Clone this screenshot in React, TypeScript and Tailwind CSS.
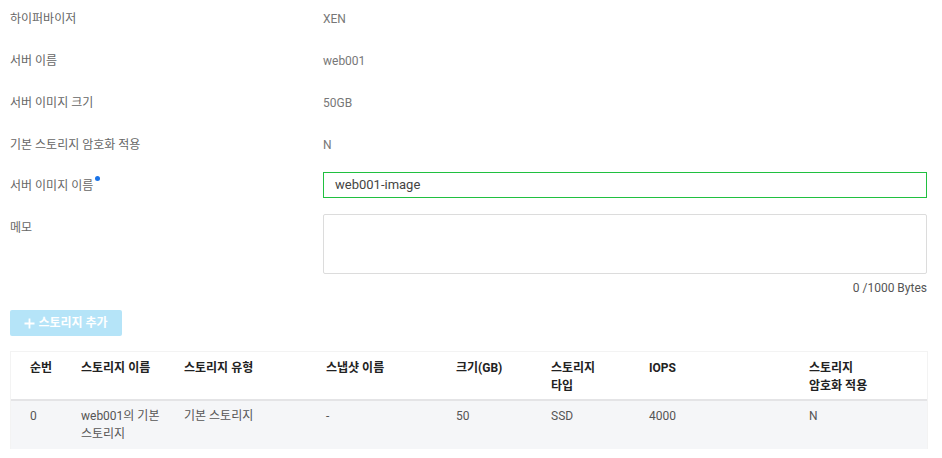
const FONT = "font-['Roboto','Noto_Sans_CJK_KR',sans-serif]";

const info = [
  { label: "하이퍼바이저", value: "XEN" },
  { label: "서버 이름", value: "web001" },
  { label: "서버 이미지 크기", value: "50GB" },
  { label: "기본 스토리지 암호화 적용", value: "N" },
];

export default function App() {
  return (
    <div className={`${FONT} h-[458px] w-[942px] overflow-hidden bg-white pl-[10px] pr-[15px] text-[12px]`}>
      {/* info rows */}
      <div className="mt-[-2px]">
        {info.map((row) => (
          <div key={row.label} className="flex h-[42px] items-center">
            <div className="w-[313px] text-[#666]">{row.label}</div>
            <div className="text-[#777]">{row.value}</div>
          </div>
        ))}
      </div>

      {/* image name */}
      <div className="mt-[6px] flex h-[26px] items-center">
        <div className="flex w-[313px] items-start pt-[2px] text-[#666]">
          서버 이미지 이름
          <span className="ml-[2px] mt-[-1px] h-[5px] w-[5px] rounded-full bg-[#1a73e8]" />
        </div>
        <div className="flex h-[26px] flex-1 items-center border border-[#20c040] px-[11px] text-[13px] text-[#444]">
          web001-image
        </div>
      </div>

      {/* memo */}
      <div className="mt-[16px] flex">
        <div className="w-[313px] pt-[5px] text-[#666]">메모</div>
        <div className="h-[60px] flex-1 rounded-[2px] border border-[#dcdcdc]" />
      </div>
      <div className="mt-[5px] text-right text-[#555]">0 /1000 Bytes</div>

      {/* add button */}
      <button className="mt-[13px] flex h-[26px] w-[112px] items-center justify-center gap-[3px] rounded-[2px] bg-[#b5e4f8] font-bold text-white">
        <svg width="11" height="11" viewBox="0 0 11 11">
          <path d="M5.5 0.5v10M0.5 5.5h10" stroke="white" strokeWidth="1.8" />
        </svg>
        스토리지 추가
      </button>

      {/* table */}
      <div className="mt-[15px] w-[918px] border-l border-r border-t border-[#f3f3f3]">
        <div className="grid h-[49px] grid-cols-[70px_103px_142px_130px_95px_98px_160px_1fr] border-b-2 border-[#e4e4e6] pt-[7px] font-bold leading-[18px] text-[#222]">
          <div className="pl-[19px]">순번</div>
          <div>스토리지 이름</div>
          <div>스토리지 유형</div>
          <div>스냅샷 이름</div>
          <div>크기(GB)</div>
          <div>
            스토리지
            <br />
            타입
          </div>
          <div>IOPS</div>
          <div>
            스토리지
            <br />
            암호화 적용
          </div>
        </div>
        <div className="grid h-[48px] grid-cols-[70px_103px_142px_130px_95px_98px_160px_1fr] bg-[#f5f6f8] pt-[6px] leading-[18px] text-[#555]">
          <div className="pl-[19px]">0</div>
          <div className="pr-[14px]">web001의 기본 스토리지</div>
          <div>기본 스토리지</div>
          <div>-</div>
          <div>50</div>
          <div>SSD</div>
          <div>4000</div>
          <div>N</div>
        </div>
      </div>
    </div>
  );
}
